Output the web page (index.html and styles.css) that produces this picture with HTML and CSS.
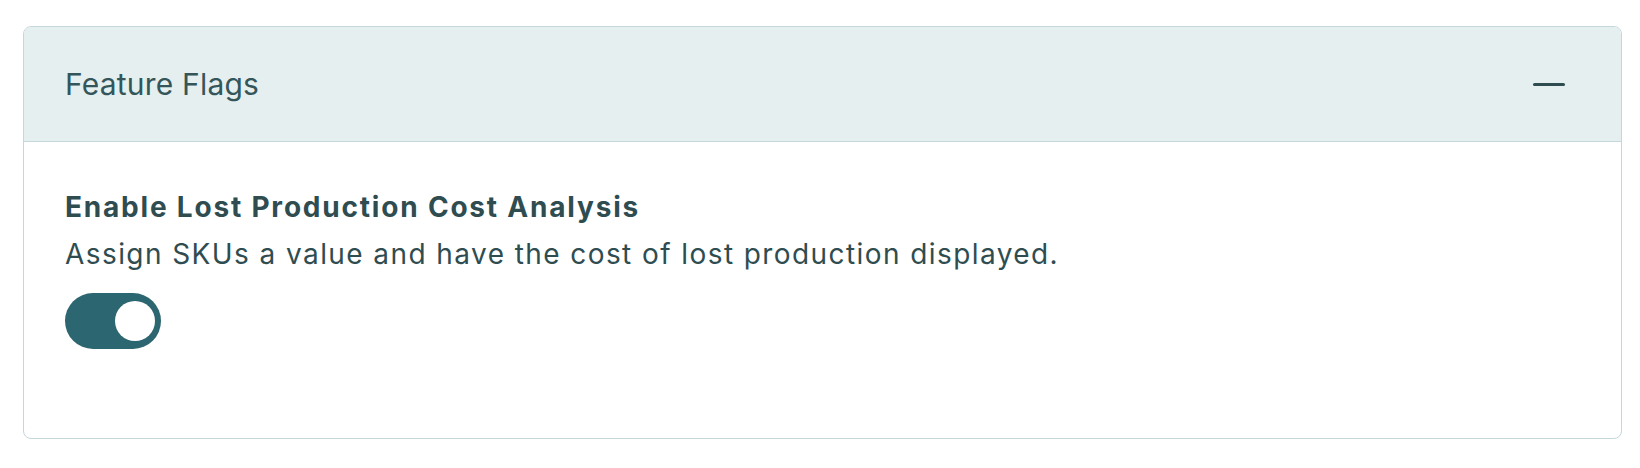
FILE: index.html
```html
<!DOCTYPE html>
<html>
  <head>
    <title>Settings</title>
    <link rel="stylesheet" href="styles.css">
  </head>
  <body>
    <div class="panel">
      <div class="panel-header">
        <span class="panel-title">Feature Flags</span>
        <button class="collapse-button" aria-label="Collapse">
          <span class="collapse-bar"></span>
        </button>
      </div>
      <div class="panel-body">
        <p class="flag-name">Enable Lost Production Cost Analysis</p>
        <p class="flag-text">Assign SKUs a value and have the cost of lost production displayed.</p>
        <label class="switch">
          <input type="checkbox" checked>
          <span class="switch-knob"></span>
        </label>
      </div>
    </div>
  </body>
</html>
```
FILE: styles.css
```css
body{
  margin: 0;
  padding: 26px 18px 0 23px;
  background-color: white;
  color: #2f4d51;
  font-family: Inter, "Noto Sans", sans-serif;
}
.panel{
  border: 1px solid #c4d7db;
  border-radius: 8px;
  height: 411px;
  overflow: hidden;
}
.panel-header{
  display: flex;
  align-items: center;
  justify-content: space-between;
  height: 114px;
  padding: 0 56px 0 41px;
  background-color: #e5eff0;
  border-bottom: 1px solid #c4d7db;
}
.panel-title{
  font-size: 30px;
  letter-spacing: 0.2px;
  color: #34555a;
}
.collapse-button{
  background-color: transparent;
  border: none;
  padding: 0;
  cursor: pointer;
}
.collapse-bar{
  display: block;
  width: 32px;
  height: 3px;
  border-radius: 2px;
  background-color: #2f4d51;
}
.panel-body{
  padding: 44px 41px;
}
.flag-name{
  margin: 0;
  font-size: 28px;
  font-weight: bold;
  letter-spacing: 1.8px;
  line-height: 42px;
}
.flag-text{
  margin: 5px 0 0 0;
  font-size: 28px;
  letter-spacing: 1.42px;
  line-height: 42px;
}
.switch{
  display: block;
  position: relative;
  width: 96px;
  height: 56px;
  margin-top: 18px;
  border-radius: 28px;
  background-color: #2c6670;
  cursor: pointer;
}
.switch input{
  display: none;
}
.switch-knob{
  position: absolute;
  top: 8px;
  left: 50px;
  width: 40px;
  height: 40px;
  border-radius: 50%;
  background-color: white;
}
```
